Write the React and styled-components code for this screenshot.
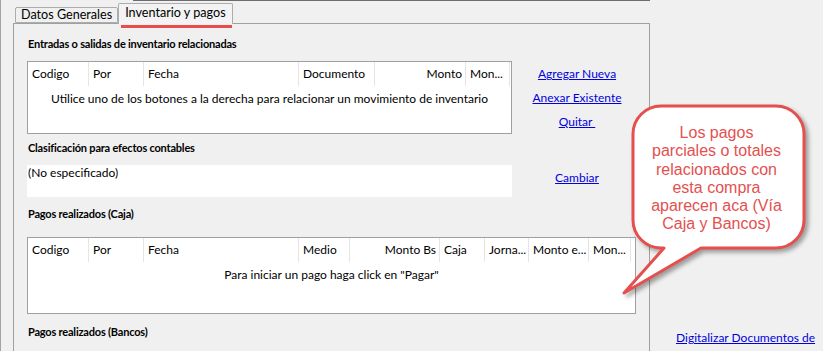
import React from "react";
import styled, { createGlobalStyle } from "styled-components";

const GlobalStyle = createGlobalStyle`
  html, body {
    margin: 0;
    padding: 0;
    background: #f0f0f0;
    overflow: hidden;
  }
  body {
    font-family: Lato, "Open Sans", sans-serif;
    font-size: 12px;
    color: #000;
  }
`;

const Page = styled.div`
  position: relative;
  display: flex;
  height: 351px;
  border-left: 1px solid #a3a3a3;
  box-sizing: border-box;
`;

const LeftColumn = styled.div`
  width: 649px;
  flex-shrink: 0;
  display: flex;
  flex-direction: column;
`;

const TopRule = styled.div`
  margin-left: 132px;
  height: 1px;
  background: #6d6d6d;
`;

const TabStrip = styled.div`
  display: flex;
  align-items: flex-end;
  height: 22px;
  margin-left: 14px;
  position: relative;
  z-index: 1;
`;

const Tab = styled.div`
  position: relative;
  box-sizing: border-box;
  height: ${(p) => (p.$active ? "21px" : "16px")};
  margin-bottom: ${(p) => (p.$active ? "-1px" : "0")};
  padding: 0 ${(p) => (p.$active ? "6px" : "5px")};
  border: 1px solid #acacac;
  border-bottom: ${(p) => (p.$active ? "none" : "1px solid #acacac")};
  border-radius: 2px 2px 0 0;
  background: ${(p) => (p.$active ? "#f3f3f3" : "#f0f0f0")};
  line-height: ${(p) => (p.$active ? "18px" : "14px")};
  font-size: 12.6px;
  white-space: nowrap;
  &::after {
    content: "";
    display: ${(p) => (p.$active ? "block" : "none")};
    position: absolute;
    left: 2px;
    right: 0;
    top: 21px;
    height: 3px;
    background: #e84c4c;
  }
`;

const Panel = styled.div`
  flex: 1;
  margin-left: 12px;
  border: 1px solid #a0a0a0;
  border-bottom: none;
  padding: 12px 12px 0 13px;
  display: flex;
  flex-direction: column;
`;

const SectionTitle = styled.div`
  font-weight: 700;
  font-size: 11px;
  line-height: 16px;
  padding-left: 1px;
  margin-top: ${(p) => p.$top || 0}px;
  letter-spacing: -0.2px;
`;

const Row = styled.div`
  display: flex;
  margin-top: ${(p) => p.$top || 0}px;
`;

const ListBox = styled.div`
  box-sizing: border-box;
  flex-shrink: 0;
  width: ${(p) => p.$width}px;
  height: ${(p) => p.$height}px;
  border: 1px solid #a0a0a0;
  background: #fff;
  overflow: hidden;
`;

const HeaderRow = styled.div`
  display: flex;
  height: 24px;
`;

const HeaderCell = styled.div`
  box-sizing: border-box;
  flex-shrink: 0;
  width: ${(p) => p.$width}px;
  padding: 0 ${(p) => (p.$right ? "3px" : "4px")};
  border-right: 1px solid #e5e5e5;
  text-align: ${(p) => (p.$right ? "right" : "left")};
  line-height: 24px;
  white-space: nowrap;
  overflow: hidden;
`;

const EmptyMessage = styled.div`
  margin-top: 5px;
  text-align: center;
  line-height: 16px;
`;

const ValueBox = styled.div`
  box-sizing: border-box;
  flex-shrink: 0;
  width: 485px;
  height: 32px;
  background: #fff;
  padding: 0 1px;
  line-height: 16px;
`;

const LinkColumn = styled.div`
  box-sizing: border-box;
  width: 125px;
  flex-shrink: 0;
  padding: 5px 0 0 5px;
  display: flex;
  flex-direction: column;
  align-items: center;
  gap: 8px;
`;

const Link = styled.a`
  color: #0000e0;
  text-decoration: underline;
  line-height: 16px;
  white-space: pre;
  cursor: pointer;
`;

const RightColumn = styled.div`
  flex: 1;
  display: flex;
  flex-direction: column;
  justify-content: flex-end;
  padding: 0 0 5px 26px;
  overflow: hidden;
`;

const DataListWrap = styled.div`
  margin-top: 15px;
`;

const Callout = styled.div`
  position: absolute;
  left: 620px;
  top: 104px;
  width: 195px;
  height: 195px;
  svg {
    display: block;
    filter: drop-shadow(3px 3px 2px rgba(0, 0, 0, 0.35));
  }
`;

const CalloutText = styled.div`
  position: absolute;
  left: 12px;
  top: 20px;
  width: 167px;
  text-align: center;
  font-family: "Liberation Sans", Arial, sans-serif;
  font-size: 16px;
  line-height: 18.3px;
  color: #e5504f;
`;

const invColumns = [
  { label: "Codigo", width: 61 },
  { label: "Por", width: 55 },
  { label: "Fecha", width: 155 },
  { label: "Documento", width: 76 },
  { label: "Monto", width: 91, right: true },
  { label: "Mon...", width: 44 },
];

const cajaColumns = [
  { label: "Codigo", width: 61 },
  { label: "Por", width: 55 },
  { label: "Fecha", width: 155 },
  { label: "Medio", width: 51 },
  { label: "Monto Bs", width: 90, right: true },
  { label: "Caja", width: 45 },
  { label: "Jorna...", width: 44 },
  { label: "Monto e...", width: 60 },
  { label: "Mon...", width: 42 },
];

const DataList = ({ columns, message, width, height }) => (
  <ListBox $width={width} $height={height}>
    <HeaderRow>
      {columns.map((c) => (
        <HeaderCell key={c.label} $width={c.width} $right={c.right}>
          {c.label}
        </HeaderCell>
      ))}
    </HeaderRow>
    <EmptyMessage>{message}</EmptyMessage>
  </ListBox>
);

const App = () => {
  return (
    <>
      <GlobalStyle />
      <Page>
        <LeftColumn>
          <TopRule />
          <TabStrip>
            <Tab>Datos Generales</Tab>
            <Tab $active>Inventario y pagos</Tab>
          </TabStrip>
          <Panel>
            <SectionTitle>Entradas o salidas de inventario relacionadas</SectionTitle>
            <Row $top={9}>
              <DataList
                columns={invColumns}
                width={485}
                height={73}
                message="Utilice uno de los botones a la derecha para relacionar un movimiento de inventario"
              />
              <LinkColumn>
                <Link>Agregar Nueva</Link>
                <Link>Anexar Existente</Link>
                <Link>{"Quitar "}</Link>
              </LinkColumn>
            </Row>
            <SectionTitle $top={6}>Clasificación para efectos contables</SectionTitle>
            <Row $top={9}>
              <ValueBox>(No especificado)</ValueBox>
              <LinkColumn>
                <Link>Cambiar</Link>
              </LinkColumn>
            </Row>
            <SectionTitle $top={9}>Pagos realizados (Caja)</SectionTitle>
            <DataListWrap>
              <DataList
                columns={cajaColumns}
                width={609}
                height={77}
                message={'Para iniciar un pago haga click en "Pagar"'}
              />
            </DataListWrap>
            <SectionTitle $top={10}>Pagos realizados (Bancos)</SectionTitle>
          </Panel>
        </LeftColumn>
        <RightColumn>
          <Link>Digitalizar Documentos de</Link>
        </RightColumn>
        <Callout>
          <svg width="195" height="195" viewBox="0 0 195 195">
            <path
              d="M 40 2 H 155 A 28 28 0 0 1 183 30 V 116 A 28 28 0 0 1 155 144 H 80 L 3 189 L 43 144 H 40 A 28 28 0 0 1 12 116 V 30 A 28 28 0 0 1 40 2 Z"
              fill="#ffffff"
              stroke="#e5504f"
              strokeWidth="3"
              strokeLinejoin="round"
            />
          </svg>
          <CalloutText>
            Los pagos
            <br />
            parciales o totales
            <br />
            relacionados con
            <br />
            esta compra
            <br />
            aparecen aca (Vía
            <br />
            Caja y Bancos)
          </CalloutText>
        </Callout>
      </Page>
    </>
  );
};

export default App;
